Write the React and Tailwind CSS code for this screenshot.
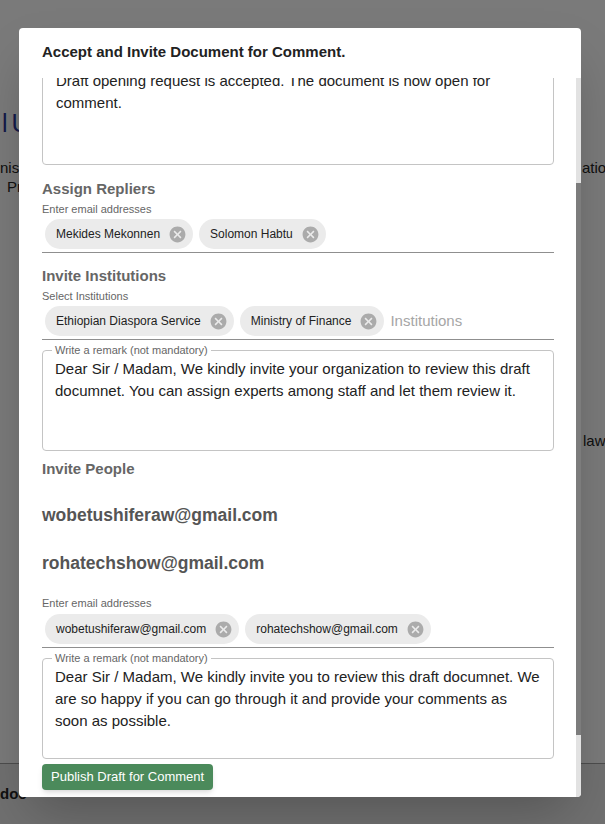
import { useEffect, useRef } from "react";

function CancelIcon() {
    return (
        <svg viewBox="0 0 24 24" className="h-[19px] w-[19px] shrink-0 fill-[#ababab]">
            <path d="M12 2C6.47 2 2 6.47 2 12s4.47 10 10 10 10-4.47 10-10S17.53 2 12 2zm5 13.59L15.59 17 12 13.41 8.41 17 7 15.59 10.59 12 7 8.41 8.41 7 12 10.59 15.59 7 17 8.41 13.41 12 17 15.59z" />
        </svg>
    );
}

function Chip({ label }) {
    return (
        <div className="flex h-[30px] items-center gap-[8px] rounded-full bg-[#ebebeb] pl-[11px] pr-[6px] text-[12px] text-[#222]">
            <span className="whitespace-nowrap">{label}</span>
            <CancelIcon />
        </div>
    );
}

function ChipField({ chips, placeholder, top = "pt-[3px]" }) {
    return (
        <div className={`flex items-center gap-[6px] border-b border-[#8f8f8f] pb-[3px] pl-[3px] ${top}`}>
            {chips.map((c) => (
                <Chip key={c} label={c} />
            ))}
            {placeholder && <span className="text-[15px] text-[#a6a6a6]">{placeholder}</span>}
        </div>
    );
}

function Remark({ text, className = "" }) {
    return (
        <fieldset className={`rounded border border-[#c4c4c4] px-[12px] ${className}`}>
            <legend className="ml-[-3px] px-[3px] text-[11px] leading-[14px] text-[#666]">
                Write a remark (not mandatory)
            </legend>
            <p className="h-[93px] pt-[1px] text-[15px] leading-[22px] text-[#222]">{text}</p>
        </fieldset>
    );
}

function SectionTitle({ children, className = "" }) {
    return <h3 className={`text-[15px] font-bold leading-[20px] text-[#666] ${className}`}>{children}</h3>;
}

function Hint({ children, className = "" }) {
    return <div className={`text-[11px] leading-[14px] text-[#666] ${className}`}>{children}</div>;
}

export default function App() {
    const scrollRef = useRef(null);

    useEffect(() => {
        // modal body is scrolled a little, first remark box is cut at the top
        if (scrollRef.current) scrollRef.current.scrollTop = 24;
    }, []);

    return (
        <div className="relative h-[824px] w-[605px] overflow-hidden [font-family:'Liberation_Sans',Arial,sans-serif]">
            {/* page behind the dialog */}
            <div className="flex h-full flex-col bg-[#f4f4f4] text-[15px] text-[#222]">
                <div className="flex-1 pt-[108px]">
                    <div className="flex pl-[2px] text-[25px] leading-[30px] text-[#283593]">
                        <span>l</span>
                        <span className="ml-[4px]">U</span>
                    </div>
                    <div className="mt-[20px] grid grid-cols-[582px_1fr] leading-[19px]">
                        <span>nist</span>
                        <span className="whitespace-nowrap">atio</span>
                    </div>
                    <div className="pl-[7px] leading-[19px]">Pro</div>
                    <div className="mt-[235px] grid grid-cols-[583px_1fr] leading-[19px]">
                        <span />
                        <span>law</span>
                    </div>
                </div>
                <div className="h-[61px] border-t border-[#9a9a9a] bg-[#e0e0e0] pt-[20px] text-[15px] font-bold leading-[19px]">
                    doc
                </div>
            </div>

            <div className="absolute inset-0 bg-black/50" />

            {/* dialog */}
            <div className="absolute left-[19px] top-[28px] flex h-[769px] w-[562px] flex-col overflow-hidden rounded bg-white shadow-2xl">
                <div className="h-[50px] shrink-0 px-[23px] pt-[14px]">
                    <h2 className="text-[15px] font-bold leading-[20px] text-[#222]">
                        Accept and Invite Document for Comment.
                    </h2>
                </div>
                <div className="flex min-h-0 flex-1">
                    <div ref={scrollRef} className="flex-1 overflow-hidden pl-[23px] pr-[22px]">
                        <div className="h-[111px] rounded border border-[#c4c4c4] px-[13px] pt-[15px] text-[15px] leading-[22px] text-[#222]">
                            Draft opening request is accepted. The document is now open for comment.
                        </div>

                        <SectionTitle className="mt-[14px]">Assign Repliers</SectionTitle>
                        <Hint className="mt-[3px]">Enter email addresses</Hint>
                        <ChipField chips={["Mekides Mekonnen", "Solomon Habtu"]} />

                        <SectionTitle className="mt-[13px]">Invite Institutions</SectionTitle>
                        <Hint className="mt-[3px]">Select Institutions</Hint>
                        <ChipField
                            chips={["Ethiopian Diaspora Service", "Ministry of Finance"]}
                            placeholder="Institutions"
                        />
                        <Remark
                            className="mt-[3px]"
                            text="Dear Sir / Madam, We kindly invite your organization to review this draft documnet. You can assign experts among staff and let them review it."
                        />

                        <SectionTitle className="mt-[8px]">Invite People</SectionTitle>
                        <div className="mt-[24px] text-[17.5px] font-bold leading-[24px] text-[#555]">
                            wobetushiferaw@gmail.com
                        </div>
                        <div className="mt-[24px] text-[17.5px] font-bold leading-[24px] text-[#555]">
                            rohatechshow@gmail.com
                        </div>
                        <Hint className="mt-[21px]">Enter email addresses</Hint>
                        <ChipField chips={["wobetushiferaw@gmail.com", "rohatechshow@gmail.com"]} top="pt-[4px]" />
                        <Remark
                            className="mt-[3px]"
                            text="Dear Sir / Madam, We kindly invite you to review this draft documnet. We are so happy if you can go through it and provide your comments as soon as possible."
                        />

                        <button className="mt-[5px] h-[26px] rounded bg-[#4b8a5b] px-[9px] text-[13px] text-white shadow-md">
                            Publish Draft for Comment
                        </button>
                        <div className="h-[16px]" />
                    </div>
                    <div className="flex w-[5px] shrink-0 flex-col">
                        <div className="h-[105px] bg-[#e2e2e2]" />
                        <div className="h-[552px] bg-[#7c7c7c]" />
                        <div className="flex-1 bg-[#e2e2e2]" />
                    </div>
                </div>
            </div>
        </div>
    );
}
